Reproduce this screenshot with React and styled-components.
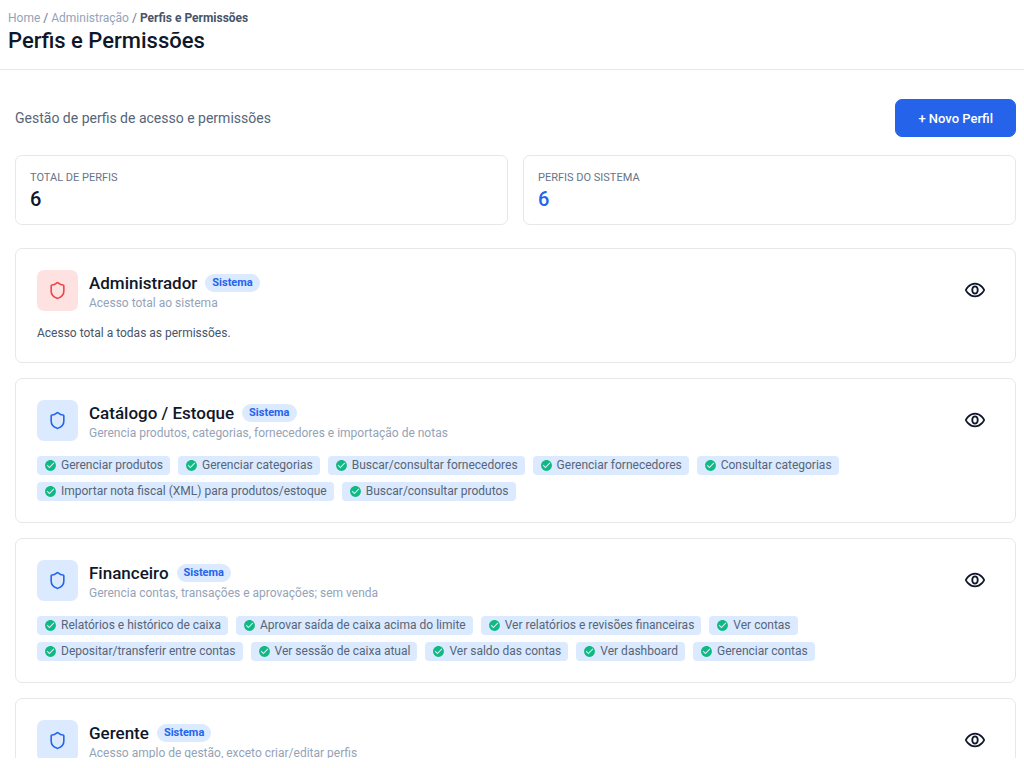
import React from 'react'
import styled, { createGlobalStyle } from 'styled-components'
import { Shield } from 'lucide-react'
import { MdCheckCircle } from 'react-icons/md'

const GlobalStyle = createGlobalStyle`
    * {
        box-sizing: border-box;
    }
    body {
        margin: 0;
        background: #fff;
        color: #0f172a;
        font-family: Roboto, "Liberation Sans", sans-serif;
        font-size: 14px;
    }
`

const Page = styled.div`
    display: flex;
    flex-direction: column;
    height: 100vh;
    padding-bottom: 10px;
`

const Header = styled.header`
    flex: none;
    padding: 10px 8px 14px;
    border-bottom: 1px solid #e5e7eb;
`

const Breadcrumb = styled.nav`
    display: flex;
    gap: 3px;
    font-size: 12px;
    line-height: 16px;
    color: #64748b;
    a {
        color: #94a3b8;
        text-decoration: none;
    }
    strong {
        color: #475569;
        font-weight: 700;
    }
`

const Title = styled.h1`
    margin: 0;
    font-size: 22px;
    line-height: 29px;
    font-weight: 500;
`

const Content = styled.main`
    flex: 1;
    min-height: 0;
    overflow: hidden;
    padding: 29px 8px 0 15px;
`

const Toolbar = styled.div`
    display: flex;
    align-items: center;
    justify-content: space-between;
    margin-bottom: 18px;
    color: #566579;
    p {
        margin: 0;
    }
`

const PrimaryButton = styled.button`
    height: 38px;
    padding: 0 22px;
    border: 1px solid #2563eb;
    border-radius: 7px;
    background: #2563eb;
    color: #fff;
    font-family: inherit;
    font-size: 13px;
    font-weight: 500;
    cursor: pointer;
`

const Stats = styled.div`
    display: grid;
    grid-template-columns: 1fr 1fr;
    gap: 15px;
    margin-bottom: 23px;
`

const StatCard = styled.div`
    padding: 15px 14px 13px;
    border: 1px solid #e5e7eb;
    border-radius: 7px;
`

const StatLabel = styled.div`
    font-size: 11px;
    line-height: 14px;
    color: #64748b;
    text-transform: uppercase;
`

const StatValue = styled.div`
    padding-top: 2px;
    font-size: 20px;
    line-height: 24px;
    font-weight: 500;
    color: ${props => props.$color || '#0f172a'};
`

const Profiles = styled.div`
    display: flex;
    flex-direction: column;
    gap: 15px;
`

const ProfileCard = styled.section`
    padding: 21px;
    border: 1px solid #e5e7eb;
    border-radius: 7px;
`

const ProfileHead = styled.div`
    display: flex;
    align-items: flex-start;
    gap: 11px;
    margin-bottom: 15px;
`

const Avatar = styled.div`
    display: flex;
    align-items: center;
    justify-content: center;
    width: 41px;
    height: 41px;
    border-radius: 7px;
    color: ${props => props.$admin ? '#ef4444' : '#2563eb'};
    background: ${props => props.$admin ? '#fee2e2' : '#dbeafe'};
`

const ProfileInfo = styled.div`
    flex: 1;
    min-width: 0;
`

const NameRow = styled.div`
    display: flex;
    align-items: center;
    gap: 8px;
    h2 {
        margin: 0;
        font-size: 17px;
        line-height: 26px;
        font-weight: 500;
    }
`

const Badge = styled.span`
    padding: 0 7px;
    border-radius: 9px;
    background: #dbeafe;
    color: #2563eb;
    font-size: 11px;
    line-height: 18px;
    font-weight: 700;
`

const Description = styled.div`
    font-size: 12px;
    line-height: 15px;
    color: #94a3b8;
`

const IconButton = styled.button`
    display: flex;
    padding: 9px 8px;
    border: 0;
    background: none;
    color: #0f172a;
    cursor: pointer;
`

const Note = styled.p`
    margin: 0;
    font-size: 12px;
    line-height: 15px;
    color: #475569;
`

const Chips = styled.ul`
    display: flex;
    flex-wrap: wrap;
    gap: 7px 8px;
    margin: 0;
    padding: 0;
    list-style: none;
`

const Chip = styled.li`
    display: flex;
    align-items: center;
    gap: 4px;
    padding: 0 7px;
    border-radius: 4px;
    background: #dbeafe;
    color: #566579;
    font-size: 12px;
    line-height: 19px;
    svg {
        color: #10b981;
    }
`

const profiles = [
    {
        name: 'Administrador',
        description: 'Acesso total ao sistema',
        admin: true,
        permissions: []
    },
    {
        name: 'Catálogo / Estoque',
        description: 'Gerencia produtos, categorias, fornecedores e importação de notas',
        permissions: [
            'Gerenciar produtos',
            'Gerenciar categorias',
            'Buscar/consultar fornecedores',
            'Gerenciar fornecedores',
            'Consultar categorias',
            'Importar nota fiscal (XML) para produtos/estoque',
            'Buscar/consultar produtos'
        ]
    },
    {
        name: 'Financeiro',
        description: 'Gerencia contas, transações e aprovações; sem venda',
        permissions: [
            'Relatórios e histórico de caixa',
            'Aprovar saída de caixa acima do limite',
            'Ver relatórios e revisões financeiras',
            'Ver contas',
            'Depositar/transferir entre contas',
            'Ver sessão de caixa atual',
            'Ver saldo das contas',
            'Ver dashboard',
            'Gerenciar contas'
        ]
    },
    {
        name: 'Gerente',
        description: 'Acesso amplo de gestão, exceto criar/editar perfis',
        permissions: []
    }
]

const EyeIcon = () => (
    <svg width="22" height="22" viewBox="0 0 24 24" fill="none" stroke="currentColor"
         strokeWidth="2" strokeLinecap="round" strokeLinejoin="round">
        <path d="M2 12s3-7 10-7 10 7 10 7-3 7-10 7-10-7-10-7Z" />
        <ellipse cx="12" cy="12" rx="3" ry="4" />
    </svg>
)

const Profile = ({ profile }) => {
    return (
        <ProfileCard>
            <ProfileHead>
                <Avatar $admin={profile.admin}>
                    <Shield size={19} />
                </Avatar>
                <ProfileInfo>
                    <NameRow>
                        <h2>{profile.name}</h2>
                        <Badge>Sistema</Badge>
                    </NameRow>
                    <Description>{profile.description}</Description>
                </ProfileInfo>
                <IconButton type="button" aria-label={`Ver ${profile.name}`}>
                    <EyeIcon />
                </IconButton>
            </ProfileHead>
            {profile.admin && <Note>Acesso total a todas as permissões.</Note>}
            {profile.permissions.length > 0 && (
                <Chips>
                    {profile.permissions.map(item => (
                        <Chip key={item}>
                            <MdCheckCircle size={13} />
                            {item}
                        </Chip>
                    ))}
                </Chips>
            )}
        </ProfileCard>
    )
}

const App = () => {
    return (
        <Page>
            <GlobalStyle />
            <Header>
                <Breadcrumb>
                    <a href="#home">Home</a>
                    <span>/</span>
                    <a href="#admin">Administração</a>
                    <span>/</span>
                    <strong>Perfis e Permissões</strong>
                </Breadcrumb>
                <Title>Perfis e Permissões</Title>
            </Header>
            <Content>
                <Toolbar>
                    <p>Gestão de perfis de acesso e permissões</p>
                    <PrimaryButton type="button">+ Novo Perfil</PrimaryButton>
                </Toolbar>
                <Stats>
                    <StatCard>
                        <StatLabel>Total de perfis</StatLabel>
                        <StatValue>6</StatValue>
                    </StatCard>
                    <StatCard>
                        <StatLabel>Perfis do sistema</StatLabel>
                        <StatValue $color="#2563eb">6</StatValue>
                    </StatCard>
                </Stats>
                <Profiles>
                    {profiles.map(profile => (
                        <Profile key={profile.name} profile={profile} />
                    ))}
                </Profiles>
            </Content>
        </Page>
    )
}

export default App
